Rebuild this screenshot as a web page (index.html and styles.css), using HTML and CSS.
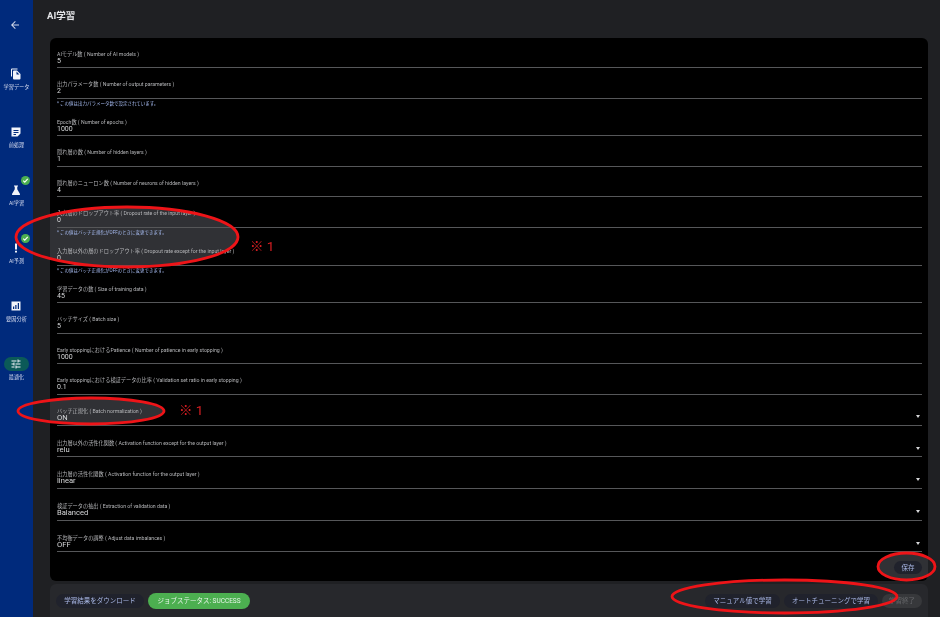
FILE: index.html
```html
<!DOCTYPE html>
<html lang="ja">
<head>
<meta charset="utf-8">
<title>AI学習</title>
<link rel="stylesheet" href="styles.css">
</head>
<body>
<div class="app">
  <aside class="sidebar">
    <div class="back">
      <svg class="ico" viewBox="0 0 24 24"><path d="M20 11H7.8l5.6-5.6L12 4l-8 8 8 8 1.4-1.4L7.8 13H20z"/></svg>
    </div>
    <nav class="nav">
      <div class="nav-item">
        <span class="nav-icon"><svg class="ico" viewBox="0 0 24 24"><path d="M15 1H4a2 2 0 0 0-2 2v14h2V3h11z"/><path d="M14 5H8a2 2 0 0 0-2 2v14a2 2 0 0 0 2 2h11a2 2 0 0 0 2-2V12l-7-7zm-1 8V7l6 6z"/></svg></span>
        <span class="nav-label">学習データ</span>
      </div>
      <div class="nav-item">
        <span class="nav-icon"><svg class="ico" viewBox="0 0 24 24"><path d="M21 3H3v18h12l6-6zM7 8h10v2H7zm0 4h10v2H7zm0 4h5v2H7z" fill-rule="evenodd"/></svg></span>
        <span class="nav-label">前処理</span>
      </div>
      <div class="nav-item">
        <span class="nav-icon"><svg class="ico" viewBox="0 0 24 24"><path d="M8 3h8v2h-1.5v5.5L20 20a1.5 1.5 0 0 1-1.3 2H5.300A1.500 1.500 0 0 1 4 20l5.500-9.500V5H8z"/></svg><span class="badge"><svg viewBox="0 0 24 24"><path d="M6 12.500l4 4 8-9" fill="none" stroke="#fff" stroke-width="3"/></svg></span></span>
        <span class="nav-label">AI学習</span>
      </div>
      <div class="nav-item">
        <span class="nav-icon"><svg class="ico" viewBox="0 0 24 24"><path d="M10 3h4v12h-4zM10 17.500h4V21h-4z"/></svg><span class="badge"><svg viewBox="0 0 24 24"><path d="M6 12.500l4 4 8-9" fill="none" stroke="#fff" stroke-width="3"/></svg></span></span>
        <span class="nav-label">AI予測</span>
      </div>
      <div class="nav-item">
        <span class="nav-icon"><svg class="ico" viewBox="0 0 24 24"><path d="M3 3h18v18H3zM6 13v5h2.500v-5zM10.500 10v8H13v-8zM15.500 6v12H18V6z" fill-rule="evenodd"/></svg></span>
        <span class="nav-label">要因分析</span>
      </div>
      <div class="nav-item">
        <span class="nav-icon nav-icon-active"><svg class="ico" viewBox="0 0 24 24"><path d="M3 17v2h6v-2H3zM3 5v2h10V5H3zm10 16v-2h8v-2h-8v-2h-2v6h2zM7 9v2H3v2h4v2h2V9H7zm14 4v-2H11v2h10zm-6-4h2V7h4V5h-4V3h-2v6z"/></svg></span>
        <span class="nav-label">最適化</span>
      </div>
    </nav>
  </aside>

  <main class="main">
    <header class="header"><h1 class="title">AI学習</h1></header>

    <section class="panel">
      <svg class="panel-marks" viewBox="50 38 878 543" aria-hidden="true">
        <ellipse class="mark-fill" cx="127" cy="237" rx="111" ry="30"/>
        <ellipse class="mark-fill" cx="91" cy="411" rx="73" ry="13"/>
        <ellipse class="mark-fill" cx="906.500" cy="566.500" rx="28.500" ry="13.500"/>
      </svg>
      <div class="field"><label class="field-label">AIモデル数 ( Number of AI models )</label><div class="field-value">5</div></div>
      <div class="field"><label class="field-label">出力パラメータ数 ( Number of output parameters )</label><div class="field-value">2</div><p class="hint">* この値は出力パラメータ数で設定されています。</p></div>
      <div class="field"><label class="field-label">Epoch数 ( Number of epochs )</label><div class="field-value">1000</div></div>
      <div class="field"><label class="field-label">隠れ層の数 ( Number of hidden layers )</label><div class="field-value">1</div></div>
      <div class="field"><label class="field-label">隠れ層のニューロン数 ( Number of neurons of hidden layers )</label><div class="field-value">4</div></div>
      <div class="field"><label class="field-label">入力層のドロップアウト率 ( Dropout rate of the input layer )</label><div class="field-value">0</div><p class="hint">* この値はバッチ正規化がOFFのときに変更できます。</p></div>
      <div class="field"><label class="field-label">入力層以外の層のドロップアウト率 ( Dropout rate except for the input layer )</label><div class="field-value">0</div><p class="hint">* この値はバッチ正規化がOFFのときに変更できます。</p></div>
      <div class="field"><label class="field-label">学習データの数 ( Size of training data )</label><div class="field-value">45</div></div>
      <div class="field"><label class="field-label">バッチサイズ ( Batch size )</label><div class="field-value">5</div></div>
      <div class="field"><label class="field-label">Early stoppingにおけるPatience ( Number of patience in early stopping )</label><div class="field-value">1000</div></div>
      <div class="field"><label class="field-label">Early stoppingにおける検証データの比率 ( Validation set ratio in early stopping )</label><div class="field-value">0.1</div></div>
      <div class="field field-select"><label class="field-label">バッチ正規化 ( Batch normalization )</label><div class="field-value">ON</div></div>
      <div class="field field-select"><label class="field-label">出力層以外の活性化関数 ( Activation function except for the output layer )</label><div class="field-value">relu</div></div>
      <div class="field field-select"><label class="field-label">出力層の活性化関数 ( Activation function for the output layer )</label><div class="field-value">linear</div></div>
      <div class="field field-select"><label class="field-label">検証データの抽出 ( Extraction of validation data )</label><div class="field-value">Balanced</div></div>
      <div class="field field-select"><label class="field-label">不均衡データの調整 ( Adjust data imbalances )</label><div class="field-value">OFF</div></div>
      <div class="save-row"><button class="btn btn-save">保存</button></div>
    </section>

    <footer class="bar">
      <div class="bar-group">
        <button class="btn btn-wide">学習結果をダウンロード</button>
        <span class="status">ジョブステータス: SUCCESS</span>
      </div>
      <div class="bar-group">
        <button class="btn btn-manual">マニュアル値で学習</button>
        <button class="btn btn-auto">オートチューニングで学習</button>
        <button class="btn btn-disabled">学習終了</button>
      </div>
    </footer>
  </main>

  <svg class="marks" viewBox="0 0 940 617" aria-hidden="true">
    <ellipse class="mark-line" cx="127" cy="237" rx="111" ry="30"/>
    <ellipse class="mark-line" cx="91" cy="411" rx="73" ry="13"/>
    <ellipse class="mark-line" cx="906.500" cy="566.500" rx="28.500" ry="13.500"/>
    <ellipse class="mark-line" cx="784.500" cy="596.500" rx="112.500" ry="16.500"/>
  </svg>
  <span class="note note-a">※ 1</span>
  <span class="note note-b">※ 1</span>
</div>
</body>
</html>
```
FILE: styles.css
```css
* { box-sizing: border-box; }

html, body {
  margin: 0;
  height: 617px;
  overflow: hidden;
  background: #1f2023;
  font-family: Roboto, "Noto Sans CJK JP", sans-serif;
}

.app { position: relative; display: flex; width: 940px; height: 617px; background: #1f2023; filter: blur(0.35px); }

.sidebar {
  width: 33px;
  flex: none;
  background: #002a7c;
  color: #f2f4fa;
  display: flex;
  flex-direction: column;
  align-items: center;
}

.back { height: 50px; padding: 19px 3px 0 0; }
.back .ico { width: 12px; height: 12px; fill: #cfd6e8; display: block; }

.nav { display: flex; flex-direction: column; margin-top: 17px; }

.nav-item {
  height: 58px;
  display: flex;
  flex-direction: column;
  align-items: center;
}

.nav-icon {
  position: relative;
  width: 25px;
  height: 14px;
  display: flex;
  align-items: center;
  justify-content: center;
}

.nav-icon-active { background: #0b5a58; border-radius: 7px; }

.ico { width: 12px; height: 12px; fill: #f2f4fa; display: block; }

.badge {
  position: absolute;
  left: 17.500px;
  top: -7px;
  width: 9px;
  height: 9px;
  border-radius: 50%;
  background: #4caf50;
  display: block;
}
.badge svg { display: block; width: 9px; height: 9px; }

.nav-label {
  margin-top: 2px;
  font-size: 5.200px;
  line-height: 8px;
  white-space: nowrap;
  color: #d5dbee;
}

.main { flex: 1; min-width: 0; display: flex; flex-direction: column; }

.header { height: 38px; padding: 9px 0 0 14px; }

.title {
  margin: 0;
  font-size: 9.500px;
  line-height: 14px;
  font-weight: 700;
  color: #e4e5e8;
}

.panel {
  position: relative;
  overflow: hidden;
  height: 543px;
  margin: 0 12px 0 17px;
  padding: 12.500px 6px 0 7px;
  background: #000;
  border-radius: 6px;
}

.panel-marks { position: absolute; left: 0; top: 0; width: 878px; height: 543px; }

.field { position: relative; margin-bottom: 13.100px; }
.field-select { margin-bottom: 14.200px; }

.field-label {
  display: block;
  height: 7px;
  font-size: 5.200px;
  line-height: 7px;
  color: #b4b5b8;
  white-space: nowrap;
}

.field-value {
  height: 10.500px;
  font-size: 7px;
  line-height: 6px;
  color: #d6d7d9;
  border-bottom: 1.500px solid #565759;
}

.field-select .field-value { font-size: 7.600px; }

.field-select::after {
  content: "";
  position: absolute;
  right: 2px;
  top: 7px;
  border-left: 2.500px solid transparent;
  border-right: 2.500px solid transparent;
  border-top: 3px solid #d6d7d9;
}

.hint {
  margin: 2px 0 -1px;
  height: 6px;
  font-size: 4.500px;
  line-height: 6px;
  color: #a7bcf2;
  white-space: nowrap;
}

.save-row { position: relative; display: flex; justify-content: flex-end; margin-top: -5.700px; }

.btn {
  border: 0;
  padding: 0;
  height: 14px;
  border-radius: 7px;
  background: #20222c;
  color: #a9b8e6;
  font-family: inherit;
  font-size: 6.500px;
  line-height: 14px;
  white-space: nowrap;
}

.btn-save { width: 28px; height: 13px; }
.btn-wide { width: 88px; }
.btn-manual { width: 75px; }
.btn-auto { width: 94px; }
.btn-disabled { width: 40px; background: #37383b; color: #66676a; }

.bar {
  height: 33px;
  margin: 3px 12px 0 17px;
  padding: 0 6px;
  background: #27282c;
  border-radius: 6px 6px 0 0;
  display: flex;
  align-items: center;
  justify-content: space-between;
}

.bar-group { display: flex; align-items: center; gap: 4px; }

.status {
  width: 102px;
  height: 16px;
  border-radius: 8px;
  background: #4caf50;
  color: #e8f5e9;
  font-size: 6.500px;
  line-height: 16px;
  text-align: center;
  white-space: nowrap;
}

.marks { position: absolute; left: 0; top: 0; width: 940px; height: 617px; pointer-events: none; }

.mark-fill { fill: #303135; }
.mark-line { fill: none; stroke: #ee1418; stroke-width: 2.800px; }

.note {
  position: absolute;
  color: #d81e22;
  font-size: 13.500px;
  line-height: 16px;
  white-space: nowrap;
}
.note-a { left: 250px; top: 238px; }
.note-b { left: 179px; top: 402px; }
```
